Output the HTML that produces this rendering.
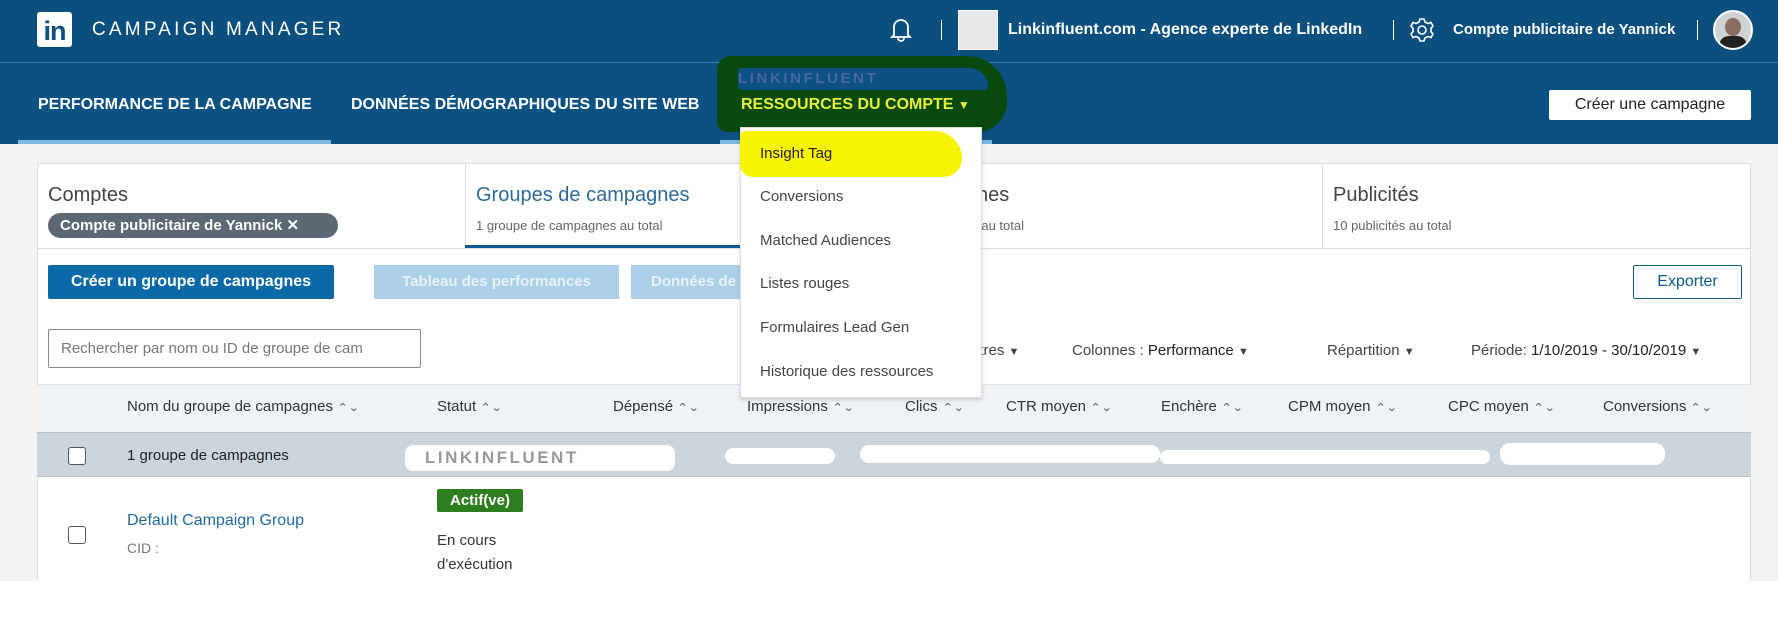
<!DOCTYPE html>
<html><head><meta charset="utf-8"><style>
*{box-sizing:border-box;margin:0;padding:0}
body{width:1778px;height:629px;overflow:hidden;background:#fff;font-family:"Liberation Sans",sans-serif;position:relative}
.a{position:absolute;white-space:nowrap}
.top{position:absolute;left:0;top:0;width:1778px;height:62px;background:#0b4f7e}
.nav{position:absolute;left:0;top:63px;width:1778px;height:81px;background:#0b5182}
.line{position:absolute;left:0;top:62px;width:1778px;height:1px;background:#3f77a2}
.navt{color:#fff;font-size:16px;font-weight:bold;top:96px}
.hdr{font-size:15px;color:#333;top:398px}
.sort{display:inline-block;font-size:11px;color:#555;margin-left:6px;transform:scaleX(1.2)}
.dd{font-size:15px;color:#444;left:760px}
.cb{position:absolute;width:18px;height:18px;border:1.5px solid #555;border-radius:3px;background:#fff}
</style></head><body>
<div class="top"></div><div class="line"></div><div class="nav"></div>
<div class="a" style="left:37px;top:12px;width:35px;height:35px;background:#fff;border-radius:3px;color:#0b4f7e;font-weight:bold;font-size:27px;line-height:38px;text-align:center;letter-spacing:-1px">in</div>
<div class="a" style="left:92px;top:19px;color:#fff;font-size:19px;letter-spacing:3.2px">CAMPAIGN MANAGER</div>
<svg class="a" style="left:890px;top:17px" width="22" height="25" viewBox="0 0 22 25"><path d="M4 18V10a7 7 0 0 1 14 0v8l2 2H2z M8 21a3 3 0 0 0 6 0" fill="none" stroke="#fff" stroke-width="1.8"/></svg>
<div class="a" style="left:941px;top:20px;width:1px;height:20px;background:#fff"></div>
<div class="a" style="left:958px;top:10px;width:40px;height:40px;background:#e6e8ea;border:1px solid #fff"></div>
<div class="a" style="left:1008px;top:21px;color:#fff;font-size:16px;font-weight:bold">Linkinfluent.com - Agence experte de LinkedIn</div>
<div class="a" style="left:1393px;top:20px;width:1px;height:20px;background:#fff"></div>
<svg class="a" style="left:1409px;top:17px" width="26" height="26" viewBox="0 0 26 26"><circle cx="13" cy="13" r="4" fill="none" stroke="#fff" stroke-width="1.6"/><path d="M11 2h4l1 3 3 1.5 3-1 2 3.5-2 2.3v3.4l2 2.3-2 3.5-3-1-3 1.5-1 3h-4l-1-3-3-1.5-3 1-2-3.5 2-2.3v-3.4l-2-2.3 2-3.5 3 1 3-1.5z" fill="none" stroke="#fff" stroke-width="1.6"/></svg>
<div class="a" style="left:1453px;top:21px;color:#fff;font-size:15px;font-weight:bold">Compte publicitaire de Yannick</div>
<div class="a" style="left:1697px;top:20px;width:1px;height:20px;background:#fff"></div>
<div class="a" style="left:1713px;top:10px;width:40px;height:40px;border-radius:50%;background:#cfd3d6;border:2px solid #fff;overflow:hidden"><div style="position:absolute;left:10px;top:6px;width:16px;height:18px;border-radius:50%;background:#8a6f5e"></div><div style="position:absolute;left:4px;top:24px;width:28px;height:16px;border-radius:10px 10px 0 0;background:#222"></div></div>

<div class="a navt" style="left:38px">PERFORMANCE DE LA CAMPAGNE</div>
<div class="a" style="left:18px;top:140px;width:313px;height:4px;background:#7fb6dc"></div>
<div class="a navt" style="left:351px">DONNÉES DÉMOGRAPHIQUES DU SITE WEB</div>
<div class="a" style="left:720px;top:140px;width:272px;height:4px;background:#7fb6dc"></div>
<div class="a" style="left:717px;top:56px;width:290px;height:76px;background:#0b4a0e;border-radius:14px 40px 30px 10px"></div>
<div class="a" style="left:738px;top:68px;width:250px;height:22px;background:#0b5182;border-radius:4px 20px 4px 4px"></div>
<div class="a" style="left:738px;top:70px;color:#4c63a8;font-size:15px;font-weight:bold;letter-spacing:2.6px">LINKINFLUENT</div>
<div class="a navt" style="left:741px;color:#e6f03c">RESSOURCES DU COMPTE <span style="font-size:12px">▼</span></div>
<div class="a" style="left:1549px;top:90px;width:202px;height:30px;background:#fff;border-radius:2px;color:#222;font-size:16px;text-align:center;line-height:30px">Créer une campagne</div>

<div class="a" style="left:0;top:144px;width:1778px;height:437px;background:#f3f3f3"></div>
<div class="a" style="left:37px;top:163px;width:1714px;height:418px;background:#fff;border:1px solid #ddd;border-bottom:none"></div>
<div class="a" style="left:37px;top:248px;width:1714px;height:1px;background:#ddd"></div>
<div class="a" style="left:465px;top:163px;width:1px;height:85px;background:#ddd"></div>
<div class="a" style="left:894px;top:163px;width:1px;height:85px;background:#ddd"></div>
<div class="a" style="left:1322px;top:163px;width:1px;height:85px;background:#ddd"></div>
<div class="a" style="left:48px;top:184px;font-size:20px;color:#444">Comptes</div>
<div class="a" style="left:48px;top:213px;width:290px;height:25px;border-radius:13px;background:#5c6975;color:#fff;font-size:15px;font-weight:bold;line-height:25px;padding-left:12px">Compte publicitaire de Yannick ✕</div>
<div class="a" style="left:476px;top:184px;font-size:20px;color:#2d6a9a">Groupes de campagnes</div>
<div class="a" style="left:476px;top:218px;font-size:13px;color:#666">1 groupe de campagnes au total</div>
<div class="a" style="left:465px;top:245px;width:280px;height:3px;background:#0a5a8e"></div>
<div class="a" style="left:977px;top:184px;font-size:20px;color:#444">nes</div>
<div class="a" style="left:964px;top:218px;font-size:13px;color:#666">es au total</div>
<div class="a" style="left:1333px;top:184px;font-size:20px;color:#444">Publicités</div>
<div class="a" style="left:1333px;top:218px;font-size:13px;color:#666">10 publicités au total</div>

<div class="a" style="left:48px;top:265px;width:286px;height:34px;background:#0a6aa8;color:#fff;font-size:16px;font-weight:bold;text-align:center;line-height:34px;border-radius:2px">Créer un groupe de campagnes</div>
<div class="a" style="left:374px;top:265px;width:245px;height:34px;background:#acd0e7;color:#e8f3fa;font-size:15px;font-weight:bold;text-align:center;line-height:34px">Tableau des performances</div>
<div class="a" style="left:631px;top:265px;width:115px;height:34px;background:#acd0e7;color:#e8f3fa;font-size:15px;font-weight:bold;line-height:34px;padding-left:20px;overflow:hidden">Données de</div>
<div class="a" style="left:1633px;top:265px;width:109px;height:34px;border:1.5px solid #0a5a8e;color:#0a5a8e;font-size:16px;text-align:center;line-height:31px;border-radius:2px">Exporter</div>

<div class="a" style="left:48px;top:329px;width:373px;height:39px;border:1px solid #888;border-radius:2px;font-size:15px;color:#777;line-height:37px;padding-left:12px">Rechercher par nom ou ID de groupe de cam</div>
<div class="a" style="left:976px;top:342px;font-size:15px;color:#444">ltres <span style="font-size:11px">▼</span></div>
<div class="a" style="left:1072px;top:342px;font-size:15px;color:#444">Colonnes : <span style="color:#222">Performance</span> <span style="font-size:11px">▼</span></div>
<div class="a" style="left:1327px;top:342px;font-size:15px;color:#444">Répartition <span style="font-size:11px">▼</span></div>
<div class="a" style="left:1471px;top:342px;font-size:15px;color:#444">Période: <span style="color:#222">1/10/2019 - 30/10/2019</span> <span style="font-size:11px">▼</span></div>

<div class="a" style="left:37px;top:384px;width:1714px;height:48px;background:#eef3f8;border-top:1px solid #dde3e8"></div>
<div class="a hdr" style="left:127px">Nom du groupe de campagnes<span class="sort">⌃⌄</span></div>
<div class="a hdr" style="left:437px">Statut<span class="sort">⌃⌄</span></div>
<div class="a hdr" style="left:613px">Dépensé<span class="sort">⌃⌄</span></div>
<div class="a hdr" style="left:747px">Impressions<span class="sort">⌃⌄</span></div>
<div class="a hdr" style="left:905px">Clics<span class="sort">⌃⌄</span></div>
<div class="a hdr" style="left:1006px">CTR moyen<span class="sort">⌃⌄</span></div>
<div class="a hdr" style="left:1161px">Enchère<span class="sort">⌃⌄</span></div>
<div class="a hdr" style="left:1288px">CPM moyen<span class="sort">⌃⌄</span></div>
<div class="a hdr" style="left:1448px">CPC moyen<span class="sort">⌃⌄</span></div>
<div class="a hdr" style="left:1603px">Conversions<span class="sort">⌃⌄</span></div>

<div class="a" style="left:37px;top:432px;width:1714px;height:45px;background:#cdd5dc;border-top:1px solid #b8c2cb;border-bottom:1px solid #b8c2cb"></div>
<div class="cb" style="left:68px;top:447px"></div>
<div class="a" style="left:127px;top:447px;font-size:15px;color:#222">1 groupe de campagnes</div>
<div class="a" style="left:405px;top:445px;width:270px;height:26px;background:#fff;border-radius:8px"></div>
<div class="a" style="left:425px;top:448px;font-size:17px;font-weight:bold;color:#999;letter-spacing:2.5px">LINKINFLUENT</div>
<div class="a" style="left:725px;top:448px;width:110px;height:16px;background:#fff;border-radius:8px"></div>
<div class="a" style="left:860px;top:445px;width:300px;height:18px;background:#fff;border-radius:9px"></div>
<div class="a" style="left:1160px;top:450px;width:330px;height:14px;background:#fff;border-radius:7px"></div>
<div class="a" style="left:1500px;top:443px;width:165px;height:22px;background:#fff;border-radius:10px"></div>

<div class="a" style="left:437px;top:489px;width:86px;height:23px;background:#2e7d1e;color:#fff;font-size:15px;font-weight:bold;text-align:center;line-height:23px;border-radius:2px">Actif(ve)</div>
<div class="cb" style="left:68px;top:526px"></div>
<div class="a" style="left:127px;top:512px;font-size:16px;color:#1f6aa0">Default Campaign Group</div>
<div class="a" style="left:127px;top:540px;font-size:14px;color:#777">CID :</div>
<div class="a" style="left:437px;top:532px;font-size:15px;color:#333">En cours</div>
<div class="a" style="left:437px;top:556px;font-size:15px;color:#333">d'exécution</div>

<div class="a" style="left:740px;top:127px;width:242px;height:271px;background:#fff;border:1px solid #ddd;box-shadow:0 2px 4px rgba(0,0,0,.15)"></div>
<div class="a" style="left:740px;top:131px;width:222px;height:46px;background:#f6f400;border-radius:6px 30px 20px 14px"></div>
<div class="a dd" style="top:145px;color:#222">Insight Tag</div>
<div class="a dd" style="top:188px">Conversions</div>
<div class="a dd" style="top:232px">Matched Audiences</div>
<div class="a dd" style="top:275px">Listes rouges</div>
<div class="a dd" style="top:319px">Formulaires Lead Gen</div>
<div class="a dd" style="top:363px">Historique des ressources</div>
</body></html>
